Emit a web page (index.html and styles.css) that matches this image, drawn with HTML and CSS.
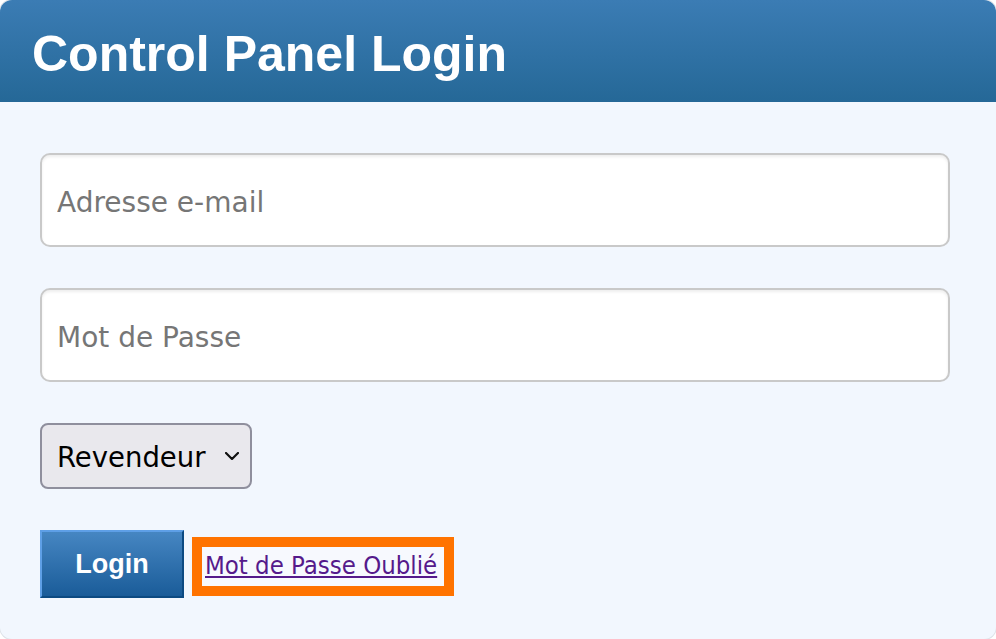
FILE: index.html
```html
<!DOCTYPE html>
<html lang="fr">
<head>
    <meta charset="UTF-8">
    <meta name="viewport" content="width=device-width, initial-scale=1.0">
    <title>Control Panel Login</title>
    <link rel="stylesheet" href="styles.css">
</head>
<body>
    <div class="login-panel">
        <div class="login-header">
            <h1>Control Panel Login</h1>
        </div>

        <form class="login-form" action="#" method="post">
            <input class="field" type="email" name="email" placeholder="Adresse e-mail">
            <input class="field" type="password" name="password" placeholder="Mot de Passe">

            <select class="account-type" name="type">
                <option>Revendeur</option>
                <option>Client</option>
            </select>

            <div class="actions">
                <button class="login-btn" type="submit">Login</button>
                <a class="forgot-link" href="#">Mot de Passe Oublié</a>
            </div>
        </form>
    </div>
</body>
</html>
```

FILE: styles.css
```css
body {
    margin: 0;
    padding: 0;
    background-color: white;
    font-family: "DejaVu Sans", Verdana, sans-serif;
}

.login-panel {
    height: 639px;
    background-color: #f2f7fe;
    border-radius: 12px;
    box-shadow: 0 0 0 1px #dde2e8;
    overflow: hidden;
}

.login-header {
    height: 102px;
    padding-left: 32px;
    background: linear-gradient(to bottom, #3b7cb4, #256897);
}

.login-header h1 {
    margin: 0;
    padding-top: 25px;
    font-family: "Liberation Sans", Arial, sans-serif;
    font-size: 50px;
    font-weight: bold;
    line-height: 58px;
    color: white;
}

.login-form {
    display: flex;
    flex-direction: column;
    align-items: flex-start;
    gap: 41px;
    padding: 51px 46px 0 40px;
}

.field {
    box-sizing: border-box;
    width: 100%;
    height: 94px;
    padding: 4px 15px 0;
    border: 2px solid #c9c9c9;
    border-radius: 10px;
    background-color: white;
    box-shadow: inset 0 2px 3px rgba(0, 0, 0, 0.07);
    font-family: "DejaVu Sans", Verdana, sans-serif;
    font-size: 28px;
    color: #222;
    outline: none;
}

.field::placeholder {
    color: #767676;
}

.account-type {
    box-sizing: border-box;
    width: 212px;
    height: 66px;
    padding: 2px 40px 0 15px;
    border: 2px solid #8f8f9d;
    border-radius: 8px;
    -webkit-appearance: none;
    appearance: none;
    background-color: #e9e8ed;
    background-image: url("data:image/svg+xml,%3Csvg xmlns='http://www.w3.org/2000/svg' width='14' height='8' viewBox='0 0 14 8'%3E%3Cpath d='M1 1l6 6 6-6' fill='none' stroke='%23111' stroke-width='2.2' stroke-linecap='round' stroke-linejoin='round'/%3E%3C/svg%3E");
    background-repeat: no-repeat;
    background-position: right 11px center;
    font-family: "DejaVu Sans", Verdana, sans-serif;
    font-size: 27.5px;
    color: black;
}

.actions {
    display: flex;
    align-items: flex-start;
    gap: 18px;
}

.login-btn {
    box-sizing: border-box;
    width: 144px;
    height: 68px;
    padding: 0;
    border: 2px solid;
    border-color: #5e9fe6 #0c4a82 #0c4a82 #5e9fe6;
    background: linear-gradient(to bottom, #4686c2, #1a5c99);
    font-family: "Liberation Sans", Arial, sans-serif;
    font-size: 27px;
    font-weight: bold;
    color: white;
    cursor: pointer;
}

.forgot-link {
    display: inline-block;
    margin-top: 17px;
    padding: 0 7px 0 3px;
    height: 39px;
    line-height: 37px;
    background-color: #f7f9fe;
    outline: 10px solid #ff7300;
    font-family: "DejaVu Sans Condensed", "DejaVu Sans", sans-serif;
    font-stretch: condensed;
    font-size: 25.5px;
    color: #551a8b;
    text-decoration: underline;
}
```
